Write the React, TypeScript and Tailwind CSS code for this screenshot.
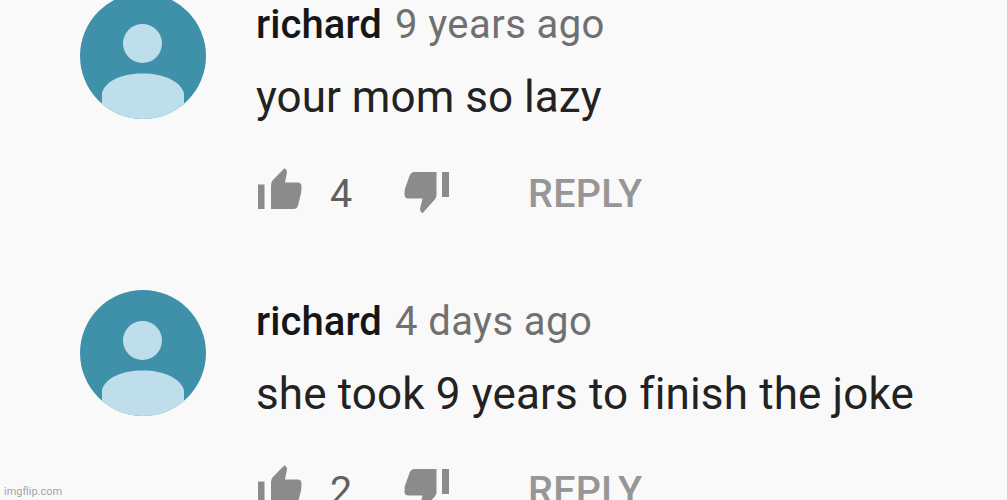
interface Comment {
  id: number;
  author: string;
  time: string;
  text: string;
  likes: number;
  textClass: string;
}

const comments: Comment[] = [
  {
    id: 1,
    author: "richard",
    time: "9 years ago",
    text: "your mom so lazy",
    likes: 4,
    textClass: "tracking-[0.04px]",
  },
  {
    id: 2,
    author: "richard",
    time: "4 days ago",
    text: "she took 9 years to finish the joke",
    likes: 2,
    textClass: "tracking-[0.14px]",
  },
];

function Avatar() {
  return (
    <div className="h-[126px] w-[126px] shrink-0 overflow-hidden rounded-full bg-[#3f91a9]">
      <svg viewBox="0 0 126 126" className="h-full w-full" fill="#bfdeeb">
        <circle cx="62.5" cy="50.5" r="19.5" />
        <path d="M22 112V100C25 88 42 80.500 63 80.500s38 8 41 20v12l-10 14H32z" />
      </svg>
    </div>
  );
}

function ThumbUp() {
  return (
    <svg viewBox="0 0 46 46" className="h-[46px] w-[46px] overflow-visible" fill="#8b8b8b">
      <path d="M2 14.5h6.500V39H2zM15 15Q15 12 16.700 10.300L28.500-1.800l1.700 1.600q1 1 .7 3L29 12.500H41.500q4.300 0 4 4.500l-.4 6L42 35.500Q41 39 37.500 39H15z" />
    </svg>
  );
}

function ThumbDown() {
  return (
    <svg viewBox="0 0 46 46" className="h-[46px] w-[46px]" fill="#8b8b8b">
      <path d="M38 2h7v25h-7zM10.500 2H32.500v23Q32.500 27.500 31 29.300L18.500 43.300l-1.800-1.900q-1-1-.6-3L18.500 28.500H4.500Q.5 28.500 .5 24.500l.2-5L5.500 6Q7 2 10.500 2z" />
    </svg>
  );
}

function CommentItem({ comment }: { comment: Comment }) {
  return (
    <article className="flex h-[297px] shrink-0 pl-20">
      <Avatar />
      <div className="ml-[50px] whitespace-nowrap">
        <div className="flex gap-[13px] text-[40px] leading-[64px]">
          <span className="font-medium tracking-[0.1px] text-[#161616]">{comment.author}</span>
          <span className="tracking-[0.42px] text-[#707070]">{comment.time}</span>
        </div>
        <p className={`text-[44px] leading-[80px] text-[#222] ${comment.textClass}`}>{comment.text}</p>
        <div className="flex h-[112px] items-center text-[39.500px] leading-[108px]">
          <ThumbUp />
          <span className="ml-[28px] w-[74px] pt-0.5 text-[#606060]">{comment.likes}</span>
          <ThumbDown />
          <span className="ml-[78px] pt-0.5 font-medium tracking-[0.3px] text-[#969696]">REPLY</span>
        </div>
      </div>
    </article>
  );
}

export default function App() {
  return (
    <main className="relative h-[500px] w-full overflow-hidden bg-[#f9f9fa] font-['Roboto',sans-serif]">
      <div className="-mt-[7px] flex flex-col">
        {comments.map((comment) => (
          <CommentItem key={comment.id} comment={comment} />
        ))}
      </div>
      <span className="absolute bottom-px left-1 text-[11px] leading-[14px] text-[#a5a5a5]">imgflip.com</span>
    </main>
  );
}
